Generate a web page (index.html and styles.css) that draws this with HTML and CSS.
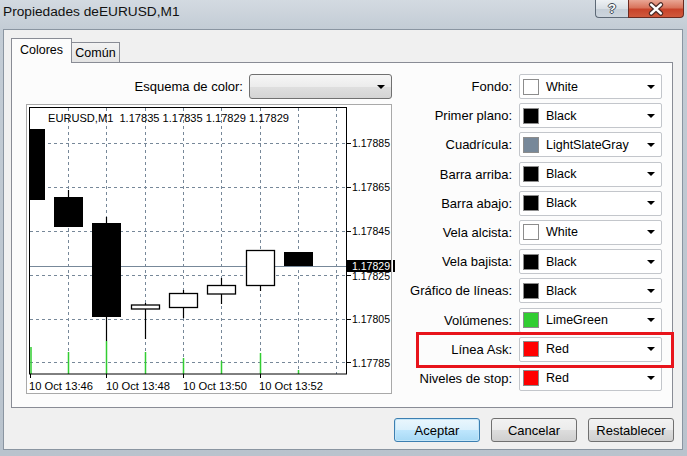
FILE: index.html
```html
<!DOCTYPE html>
<html lang="es">
<head>
<meta charset="utf-8">
<title>Propiedades deEURUSD,M1</title>
<link rel="stylesheet" href="styles.css">
</head>
<body>
<div class="window">
  <div class="titlebar">
    <span class="title">Propiedades deEURUSD,M1</span>
    <div class="caption">
      <span class="cap help">?</span>
      <span class="cap close"><svg width="56" height="18" viewBox="0 0 56 18"><path d="M23 4.5L33 13.5M33 4.5L23 13.5" stroke="#4b2a26" stroke-width="5" stroke-linecap="round"/><path d="M23 4.5L33 13.5M33 4.5L23 13.5" stroke="#fff" stroke-width="2.6" stroke-linecap="round"/></svg></span>
    </div>
  </div>
  <div class="client">
    <div class="tabs">
      <div class="tab active">Colores</div>
      <div class="tab">Común</div>
    </div>
    <div class="panel">
      <div class="left">
        <div class="scheme-row">
          <span class="lbl">Esquema de color:</span>
          <div class="scheme-combo"><span class="arrow"></span></div>
        </div>
        <svg class="chart" width="366" height="290" viewBox="26 104 366 290">
          <rect x="26.5" y="104.5" width="365" height="289" fill="#fff" stroke="#a9a9a9"/>
          <g stroke="#778899" stroke-width="1" stroke-dasharray="3 3" fill="none">
            <path d="M30 143.5H347M30 187.5H347M30 231.5H347M30 275.5H347M30 319.5H347M30 362.5H347"/>
            <path d="M68.5 108V374M106.5 108V374M145.5 108V374M183.5 108V374M221.5 108V374M260.5 108V374M298.5 108V374M336.5 108V374"/>
          </g>
          <path d="M30 266.5H347" stroke="#778899" stroke-width="1"/>
          <g stroke="#32cd32" stroke-width="1.5">
            <path d="M31 347V374M68.5 352V374M106.5 341V374M145.5 352V374M183.5 358V374M221.5 361V374M260.5 353V374M298.5 370V374"/>
          </g>
          <g stroke="#000" stroke-width="1.2">
            <path d="M68.5 190V197M106.5 217V341M145.5 303V339M183.5 290V318M221.5 278V304M260.5 286V291"/>
          </g>
          <g fill="#000">
            <rect x="29" y="129" width="16" height="71"/>
            <rect x="54" y="197" width="29" height="30"/>
            <rect x="92" y="223" width="29" height="94"/>
            <rect x="284" y="252" width="29" height="14"/>
          </g>
          <g fill="#fff" stroke="#000" stroke-width="1.3">
            <rect x="131.5" y="305" width="28" height="4"/>
            <rect x="169.5" y="293.5" width="28" height="14"/>
            <rect x="207.5" y="285.5" width="28" height="8.5"/>
            <rect x="246.5" y="250.5" width="28" height="35"/>
          </g>
          <rect x="29.5" y="107.5" width="317" height="266.5" fill="none" stroke="#000"/>
          <path d="M347 143.5h4M347 187.5h4M347 231.5h4M347 275.5h4M347 319.5h4M347 362.5h4M30.5 374v4M106.5 374v4M183.5 374v4M260.5 374v4" stroke="#000"/>
          <g class="ct">
            <text x="48" y="122" textLength="241" lengthAdjust="spacingAndGlyphs" xml:space="preserve">EURUSD,M1  1.17835 1.17835 1.17829 1.17829</text>
            <text x="352" y="147" textLength="38" lengthAdjust="spacingAndGlyphs">1.17885</text>
            <text x="352" y="191" textLength="38" lengthAdjust="spacingAndGlyphs">1.17865</text>
            <text x="352" y="235" textLength="38" lengthAdjust="spacingAndGlyphs">1.17845</text>
            <text x="352" y="280" textLength="38" lengthAdjust="spacingAndGlyphs">1.17825</text>
            <text x="352" y="323" textLength="38" lengthAdjust="spacingAndGlyphs">1.17805</text>
            <text x="352" y="367" textLength="38" lengthAdjust="spacingAndGlyphs">1.17785</text>
            <text x="29" y="390" textLength="64" lengthAdjust="spacingAndGlyphs">10 Oct 13:46</text>
            <text x="106" y="390" textLength="64" lengthAdjust="spacingAndGlyphs">10 Oct 13:48</text>
            <text x="183" y="390" textLength="64" lengthAdjust="spacingAndGlyphs">10 Oct 13:50</text>
            <text x="259" y="390" textLength="64" lengthAdjust="spacingAndGlyphs">10 Oct 13:52</text>
          </g>
          <rect x="347" y="260" width="44" height="12" fill="#000"/>
          <text class="ct cur" x="352" y="270" textLength="38" lengthAdjust="spacingAndGlyphs">1.17829</text>
          <rect x="393" y="260" width="2" height="12" fill="#000"/>
        </svg>
      </div>
      <div class="right">
        <span class="lbl">Fondo:</span>
        <div class="combo"><span class="sw" style="background:#ffffff"></span><span class="val">White</span><span class="arrow"></span></div>
        <span class="lbl">Primer plano:</span>
        <div class="combo"><span class="sw" style="background:#000000"></span><span class="val">Black</span><span class="arrow"></span></div>
        <span class="lbl">Cuadrícula:</span>
        <div class="combo"><span class="sw" style="background:#778899"></span><span class="val">LightSlateGray</span><span class="arrow"></span></div>
        <span class="lbl">Barra arriba:</span>
        <div class="combo"><span class="sw" style="background:#000000"></span><span class="val">Black</span><span class="arrow"></span></div>
        <span class="lbl">Barra abajo:</span>
        <div class="combo"><span class="sw" style="background:#000000"></span><span class="val">Black</span><span class="arrow"></span></div>
        <span class="lbl">Vela alcista:</span>
        <div class="combo"><span class="sw" style="background:#ffffff"></span><span class="val">White</span><span class="arrow"></span></div>
        <span class="lbl">Vela bajista:</span>
        <div class="combo"><span class="sw" style="background:#000000"></span><span class="val">Black</span><span class="arrow"></span></div>
        <span class="lbl">Gráfico de líneas:</span>
        <div class="combo"><span class="sw" style="background:#000000"></span><span class="val">Black</span><span class="arrow"></span></div>
        <span class="lbl">Volúmenes:</span>
        <div class="combo"><span class="sw" style="background:#32cd32"></span><span class="val">LimeGreen</span><span class="arrow"></span></div>
        <span class="lbl">Línea Ask:</span>
        <div class="combo"><span class="sw" style="background:#ff0000"></span><span class="val">Red</span><span class="arrow"></span></div>
        <span class="lbl">Niveles de stop:</span>
        <div class="combo"><span class="sw" style="background:#ff0000"></span><span class="val">Red</span><span class="arrow"></span></div>
      </div>
      <div class="highlight"></div>
    </div>
    <div class="buttons">
      <button class="btn default">Aceptar</button>
      <button class="btn">Cancelar</button>
      <button class="btn">Restablecer</button>
    </div>
  </div>
</div>
</body>
</html>
```

FILE: styles.css
```css
html, body {
  margin: 0;
  padding: 0;
}
body {
  width: 687px;
  height: 456px;
  overflow: hidden;
  font-family: "Liberation Sans", Arial, sans-serif;
  color: #000;
}
.window {
  width: 687px;
  height: 456px;
  box-sizing: border-box;
  padding: 0 4px 6px 3px;
  display: flex;
  flex-direction: column;
  background: linear-gradient(180deg, #d3dae1 0px, #c3ccd5 29px, #b9c3cd 100%);
}
.titlebar {
  height: 29px;
  flex: none;
  display: flex;
  align-items: flex-start;
}
.title {
  font-size: 13.7px;
  line-height: 16px;
  margin: 4px 0 0 0;
  color: #111;
}
.caption {
  margin-left: auto;
  margin-right: -1px;
  display: flex;
}
.cap {
  height: 18px;
  box-sizing: border-box;
  display: flex;
  align-items: center;
  justify-content: center;
}
.help {
  width: 33px;
  border: 1px solid #5d6976;
  border-top: none;
  border-right: none;
  border-radius: 0 0 0 4px;
  background: linear-gradient(180deg, #eef1f4 0%, #d9dfe5 50%, #c5ced7 51%, #cdd5dd 100%);
  color: #fff;
  font-weight: bold;
  font-size: 13px;
  text-shadow: -1px 0 #3d4753, 1px 0 #3d4753, 0 -1px #3d4753, 0 1px #3d4753;
}
.close {
  width: 56px;
  border: 1px solid #6a2a20;
  border-top: none;
  border-radius: 0 0 4px 0;
  background: linear-gradient(180deg, #e9a694 0%, #d9745c 45%, #c8432a 55%, #d0593c 100%);
}
.close svg {
  display: block;
}
.client {
  flex: 1;
  background: #f0f0f0;
  border: 1px solid #8a95a1;
  padding: 8px 9px 0 7px;
  display: flex;
  flex-direction: column;
}
.tabs {
  display: flex;
  align-items: flex-end;
  height: 25px;
  margin-bottom: -1px;
  position: relative;
  z-index: 1;
}
.tab {
  box-sizing: border-box;
  border: 1px solid #898c95;
  border-bottom: none;
  font-size: 12.5px;
  display: flex;
  align-items: center;
  justify-content: center;
}
.tab.active {
  width: 61px;
  height: 25px;
  background: #fcfcfc;
  padding-bottom: 2px;
}
.tab:not(.active) {
  width: 48px;
  height: 20px;
  margin-bottom: 1px;
  border-left: none;
  background: linear-gradient(180deg, #f3f3f3, #e3e3e3);
  padding-top: 1px;
}
.panel {
  position: relative;
  height: 346px;
  box-sizing: border-box;
  border: 1px solid #898c95;
  background: #fcfcfc;
  display: flex;
  padding: 11px 10px 0 14px;
}
.left {
  width: 366px;
  display: flex;
  flex-direction: column;
}
.lbl {
  font-size: 13px;
  white-space: nowrap;
}
.scheme-row {
  height: 25px;
  display: flex;
  justify-content: flex-end;
  align-items: center;
  gap: 6px;
}
.scheme-combo {
  width: 143px;
  height: 25px;
  box-sizing: border-box;
  border: 1px solid #707070;
  border-radius: 3px;
  background: linear-gradient(180deg, #f6f6f6 0%, #ececec 50%, #dfdfdf 51%, #d4d4d4 100%);
  display: flex;
  align-items: center;
  justify-content: flex-end;
  padding-right: 6px;
}
.arrow {
  width: 0;
  height: 0;
  border-left: 4px solid transparent;
  border-right: 4px solid transparent;
  border-top: 4px solid #000;
}
.chart {
  display: block;
  margin-top: 5px;
  overflow: visible;
}
.ct {
  font-family: "Liberation Sans", Arial, sans-serif;
  font-size: 10.8px;
  fill: #000;
}
.ct.cur {
  fill: #fff;
}
.right {
  margin-left: auto;
  display: grid;
  grid-template-columns: max-content 143px;
  grid-auto-rows: 25px;
  column-gap: 7px;
  row-gap: 4.2px;
  align-content: start;
}
.right .lbl {
  justify-self: end;
  align-self: center;
}
.combo {
  box-sizing: border-box;
  height: 25px;
  border: 1px solid #c3c6cb;
  border-radius: 2px;
  background: #fff;
  display: flex;
  align-items: center;
  padding: 0 6px 0 3px;
}
.sw {
  width: 16px;
  height: 16px;
  box-sizing: border-box;
  border: 1px solid #8c8c8c;
  flex: none;
}
.val {
  font-size: 12.5px;
  margin-left: 7px;
  flex: 1;
}
.highlight {
  position: absolute;
  left: 404px;
  top: 269px;
  width: 258px;
  height: 36px;
  box-sizing: border-box;
  border: 3px solid #e8141b;
  pointer-events: none;
}
.buttons {
  display: flex;
  justify-content: flex-end;
  gap: 11px;
  margin-top: 10px;
  margin-right: -1px;
}
.btn {
  width: 86px;
  height: 24px;
  box-sizing: border-box;
  border: 1px solid #707070;
  border-radius: 3px;
  background: linear-gradient(180deg, #f2f2f2 0%, #ebebeb 50%, #dddddd 51%, #cfcfcf 100%);
  font-family: "Liberation Sans", Arial, sans-serif;
  font-size: 13px;
  color: #000;
  padding: 0;
}
.btn.default {
  border-color: #3c7fb1;
  background: linear-gradient(180deg, #eaf6fd 0%, #d9f0fc 50%, #bee6fd 51%, #a7d9f5 100%);
  box-shadow: inset 0 0 0 1px #c5e6f8;
}
```
